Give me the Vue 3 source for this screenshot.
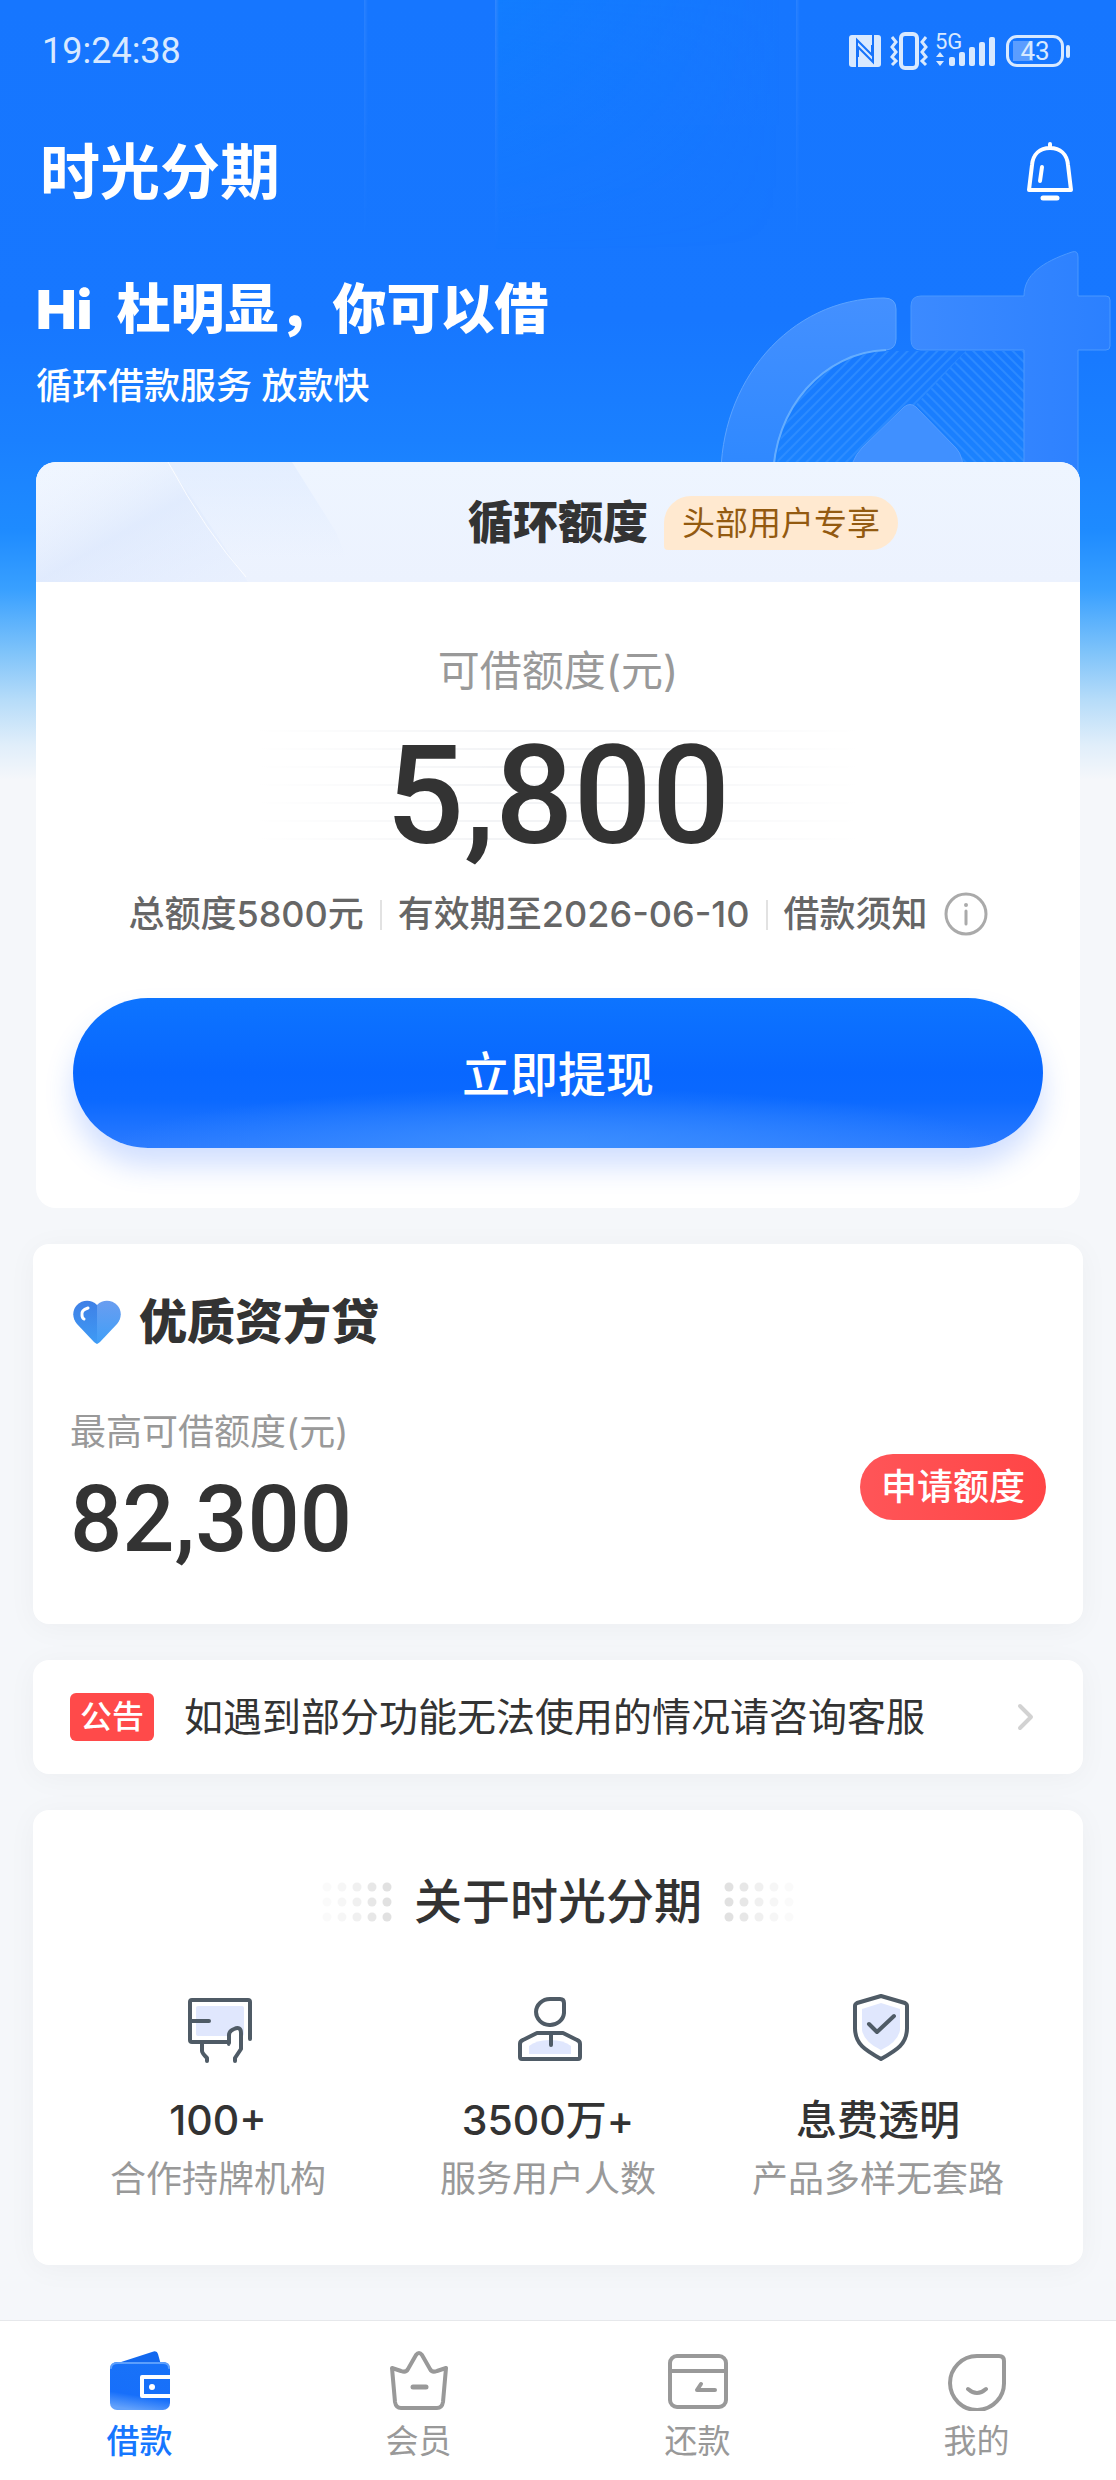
<script setup>
const bars = [9, 14, 19, 24, 29]
const dots = [0.12, 0.25, 0.45, 0.7, 0.9]
const tabs = [
  { id: 'loan', name: '借款' },
  { id: 'member', name: '会员' },
  { id: 'repay', name: '还款' },
  { id: 'me', name: '我的' }
]
const facts = [
  { id: 'card', value: '100+', label: '合作持牌机构' },
  { id: 'user', value: '3500万+', label: '服务用户人数' },
  { id: 'shield', value: '息费透明', label: '产品多样无套路' }
]
</script>

<template>
  <div class="page">
    <svg class="deco" width="400" height="240" viewBox="716 240 400 240" fill="none" aria-hidden="true">
      <defs>
        <linearGradient id="arc" x1="0" y1="0" x2="0" y2="1">
          <stop offset="0" stop-color="#4490ff" /><stop offset="1" stop-color="#2d88ff" />
        </linearGradient>
        <linearGradient id="stem" x1="911" y1="300" x2="1110" y2="300" gradientUnits="userSpaceOnUse">
          <stop offset="0" stop-color="#3c8aff" /><stop offset="1" stop-color="#2b80ff" />
        </linearGradient>
        <pattern id="rise" width="7" height="7" patternUnits="userSpaceOnUse" patternTransform="rotate(-45)">
          <path d="M0 1H7" stroke="#3a94ff" stroke-width="2" />
        </pattern>
        <pattern id="fall" width="7" height="7" patternUnits="userSpaceOnUse" patternTransform="rotate(45)">
          <path d="M0 1H7" stroke="#3a94ff" stroke-width="2" />
        </pattern>
      </defs>
      <path d="M777 470C777 400 830 351 890 351H966L846 480H777Z" fill="url(#rise)" opacity=".6" />
      <path d="M966 351H1024V480H846Z" fill="url(#fall)" opacity=".6" />
      <path d="M721 480C719 384 788 298 884 298Q896 298 896 309V339Q896 349 886 350C824 352 773 408 773 480Z" fill="url(#arc)" stroke="#5ba3ff" stroke-width="1" />
      <path d="M773 480C773 408 824 352 886 350" stroke="#64adff" stroke-width="2" />
      <path d="M921 296H1024C1024 275 1042 262 1072 252Q1078 250 1078 257V296H1106Q1110 296 1110 300V346Q1110 350 1106 350H1078V480H1024V350H921Q911 350 911 340V306Q911 296 921 296Z" fill="url(#stem)" stroke="#4a98ff" stroke-width="1" />
      <path d="M904 407Q910 402 916 407L956 448Q964 456 964 480H850Q850 460 862 448Z" fill="#4090ff" stroke="#559eff" />
    </svg>

    <header class="top">
      <div class="status">
        <time class="clock">19:24:38</time>
        <div class="signals">
          <svg width="32" height="32" viewBox="0 0 32 32" aria-hidden="true">
            <rect width="32" height="32" rx="3" fill="#d8e9ff" />
            <path d="M8 32V5L23 20V10M24 0V27L9 12V22" fill="none" stroke="#1673fb" stroke-width="2" />
          </svg>
          <svg width="38" height="38" viewBox="0 0 38 38" fill="none" stroke="#d8e9ff" stroke-width="3" aria-hidden="true">
            <rect x="11" y="2" width="16" height="34" rx="4" stroke-width="4" />
            <path d="M2 5L6 10L2 15L6 20L2 25L6 29L2 33M36 5L32 10L36 15L32 20L36 25L32 29L36 33" />
          </svg>
          <div class="mobile">
            <span class="gen">5G</span>
            <svg class="updown" width="8" height="14" viewBox="0 0 8 14" fill="#d8e9ff" aria-hidden="true"><path d="M4 0L8 5H0ZM4 14L0 9H8Z" /></svg>
            <i v-for="h in bars" :key="h" class="bar" :style="{ height: h + 'px' }"></i>
          </div>
          <div class="battery"><span>43</span></div>
        </div>
      </div>
      <div class="brand">
        <strong class="logo">时光分期</strong>
        <button class="bell" type="button" aria-label="消息">
          <svg width="50" height="60" viewBox="0 0 50 60" fill="none" stroke="#fff" stroke-width="4" stroke-linecap="round" stroke-linejoin="round" aria-hidden="true">
            <path d="M25 2V6M4 48L7 23C8 12 15 6 25 6S42 12 43 23L46 48ZM17 25L15 39" />
            <path d="M18 56H32" stroke-width="5" />
          </svg>
        </button>
      </div>
      <h1><span>Hi</span><span>杜明显，你可以借</span></h1>
      <p class="sub">循环借款服务 放款快</p>
    </header>

    <main>
      <section class="quota">
        <div class="quota-head">
          <svg class="sheen" width="320" height="120" viewBox="0 0 320 120" aria-hidden="true">
            <defs>
              <linearGradient id="sh" x1="0" y1="0" x2="1" y2="1">
                <stop offset="0" stop-color="#fff" stop-opacity=".1" /><stop offset=".5" stop-color="#cfdffc" stop-opacity=".4" /><stop offset="1" stop-color="#dce8ff" stop-opacity=".2" />
              </linearGradient>
              <linearGradient id="sh2" x1="0" y1="0" x2="0" y2="1">
                <stop offset="0" stop-color="#d9e7ff" stop-opacity=".5" /><stop offset=".8" stop-color="#d9e7ff" stop-opacity="0" />
              </linearGradient>
            </defs>
            <path d="M0 0H132L212 120H0Z" fill="url(#sh)" />
            <path d="M132 0H256L300 70L320 120H212Z" fill="url(#sh2)" />
            <path d="M132 0Q170 70 210 115" fill="none" stroke="#fff" stroke-opacity=".8" />
          </svg>
          <h2>循环额度</h2>
          <span class="vip">头部用户专享</span>
        </div>
        <p class="avail">可借额度(元)</p>
        <p class="amount">5,800</p>
        <div class="meta">
          <span>总额度5800元</span>
          <span>有效期至2026-06-10</span>
          <a href="#notice">借款须知
            <svg width="44" height="44" viewBox="0 0 44 44" fill="none" stroke="#aaa" stroke-width="2" stroke-linecap="round" aria-hidden="true">
              <circle cx="22" cy="22" r="20" stroke-width="3" /><path d="M22 19V32" stroke-width="3" /><circle cx="22" cy="13" r="1" stroke-width="2" />
            </svg>
          </a>
        </div>
        <button class="withdraw" type="button">立即提现</button>
      </section>

      <section class="card lender">
        <div class="lender-title">
          <svg width="48" height="44" viewBox="0 0 48 44" aria-hidden="true">
            <defs>
              <linearGradient id="hl" x1="0" y1="0" x2="0" y2="1"><stop offset="0" stop-color="#3f80e6" /><stop offset="1" stop-color="#3e9bf5" /></linearGradient>
              <linearGradient id="hr" x1="0" y1="0" x2="0" y2="1"><stop offset="0" stop-color="#6a9df0" /><stop offset="1" stop-color="#3f9ff8" /></linearGradient>
            </defs>
            <path d="M24 5C18-1 9 0 4 5S-1 18 4 24L21 42Q24 44 24 44Z" fill="url(#hl)" />
            <path d="M24 5C30-1 39 0 44 5S49 18 44 24L27 42Q24 44 24 44Z" fill="url(#hr)" />
            <path d="M15 8Q8 10 9 15Q9 18 11 19" fill="none" stroke="#fff" stroke-width="3" stroke-linecap="round" />
          </svg>
          <h2>优质资方贷</h2>
        </div>
        <div class="lender-row">
          <div>
            <p class="max">最高可借额度(元)</p>
            <p class="sum">82,300</p>
          </div>
          <button class="apply" type="button">申请额度</button>
        </div>
      </section>

      <a class="card notice" href="#service">
        <span class="tag">公告</span>
        <span class="msg">如遇到部分功能无法使用的情况请咨询客服</span>
        <svg width="18" height="28" viewBox="0 0 18 28" fill="none" stroke="#d2d2d2" stroke-width="4" stroke-linecap="round" stroke-linejoin="round" aria-hidden="true"><path d="M3 3L14 14L3 25" /></svg>
      </a>

      <section class="card about">
        <div class="about-title">
          <svg width="70" height="40" viewBox="0 0 70 40" aria-hidden="true">
            <g v-for="(o, i) in dots" :key="i" fill="#dedede" :opacity="o">
              <circle v-for="y in [5, 20, 35]" :key="y" :cx="5 + i * 15" :cy="y" r="4.5" />
            </g>
          </svg>
          <h2>关于时光分期</h2>
          <svg width="70" height="40" viewBox="0 0 70 40" aria-hidden="true">
            <g v-for="(o, i) in dots" :key="i" fill="#dedede" :opacity="o">
              <circle v-for="y in [5, 20, 35]" :key="y" :cx="65 - i * 15" :cy="y" r="4.5" />
            </g>
          </svg>
        </div>
        <ul class="facts">
          <li v-for="f in facts" :key="f.id">
            <svg width="72" height="72" viewBox="0 0 72 72" fill="none" stroke="#4f5b66" stroke-width="4" stroke-linecap="round" stroke-linejoin="round" aria-hidden="true">
              <g v-if="f.id === 'card'">
                <rect x="14" y="14" width="48" height="30" rx="2" fill="#e0e7fd" stroke="none" />
                <path d="M47 52V50H10Q8 50 8 48V10Q8 8 10 8H66Q68 8 68 10V47M9 29H27M20 51V59Q20 61 25 66V69" />
                <path d="M47 51V43Q47 39 52 37Q59 34 59 41V57L53 66V69" fill="#fff" />
              </g>
              <g v-else-if="f.id === 'user'" transform="translate(2 0)">
                <path d="M15 62V54Q22 48 36 48T57 54V62Z" fill="#e0e7fd" stroke="none" />
                <path d="M36 7H46Q50 7 50 11V21A14 13 0 1 1 36 7ZM23 41H49L63 48Q66 49 66 52V65Q66 67 64 67H8Q6 67 6 65V52Q6 49 9 48ZM37 42V53" />
              </g>
              <g v-else transform="translate(3 0)">
                <path d="M36 11L55 17V38Q53 50 36 58Q19 50 17 38V17Z" fill="#e0e7fd" stroke="none" />
                <path d="M36 4L60 11Q62 12 62 14V36C62 52 52 58 36 67C20 58 10 52 10 36V14Q10 12 12 11ZM24 32L32 40L49 24" />
              </g>
            </svg>
            <strong>{{ f.value }}</strong>
            <span>{{ f.label }}</span>
          </li>
        </ul>
      </section>
    </main>

    <nav class="tabs">
      <a v-for="t in tabs" :key="t.id" :href="'#' + t.id" :class="{ on: t.id === 'loan' }">
        <svg width="60" height="60" viewBox="0 0 60 60" fill="none" stroke="#999" stroke-width="4" stroke-linecap="round" stroke-linejoin="round" aria-hidden="true">
          <g v-if="t.id === 'loan'" stroke="none">
            <defs>
              <linearGradient id="wl" x1=".6" y1="0" x2=".4" y2="1"><stop offset="0" stop-color="#1872f8" /><stop offset=".7" stop-color="#176ffa" /><stop offset="1" stop-color="#64a2fb" /></linearGradient>
            </defs>
            <path d="M8 12L42 1Q47-1 48 3L51 14Z" fill="#1268ef" />
            <rect y="11" width="60" height="48" rx="7" fill="url(#wl)" />
            <path d="M1 17Q1 12 8 12H53Q59 12 59 17" fill="none" stroke="#5c9ffc" stroke-width="2" />
            <path d="M60 26H32V45H60" fill="none" stroke="#fff" stroke-width="4" />
            <circle cx="42" cy="36" r="3" fill="#fff" />
          </g>
          <g v-else-if="t.id === 'member'">
            <path d="M3 17L12 20Q17 22 19 18L27 4Q30 0 33 4L41 18Q43 22 48 20L57 17L54 51Q53 57 48 57H12Q7 57 6 51L3 17Z" />
            <path d="M24 36H37" stroke-width="5" />
          </g>
          <g v-else-if="t.id === 'repay'">
            <rect x="2" y="5" width="56" height="51" rx="7" /><path d="M2 20H58M47 39H29L33 33" />
          </g>
          <g v-else>
            <path d="M30 5H52Q57 5 57 10V31A27 27 0 1 1 30 5ZM21 38Q30 46 39 38" />
          </g>
        </svg>
        <span>{{ t.name }}</span>
      </a>
    </nav>
  </div>
</template>

<style>
body {
  margin: 0;
  background: #f5f7fa;
}
</style>

<style scoped>
.page {
  position: relative;
  display: flex;
  flex-direction: column;
  min-height: 100vh;
  color: #333;
  font-family: Inter, "Noto Sans CJK SC", sans-serif;
  background: linear-gradient(#1676ff, #1777ff 320px, #1a80ff 440px, #1e8bff 530px, #39a0ff 590px, #7cc2fa 650px, #b6dcf9 700px, #e0eefa 745px, #f5f7fa 780px);
}
.page::before {
  content: "";
  position: absolute;
  inset: 0 0 auto;
  height: 250px;
  background:
    linear-gradient(90deg, transparent 364px, #ffffff18 364px, #ffffff00 368px),
    linear-gradient(90deg, transparent 495px, #ffffff20 495px, #0a88ff60 499px, #0a88ff00 780px),
    linear-gradient(90deg, transparent 796px, #ffffff18 796px, #ffffff00 800px);
  mask-image: linear-gradient(#000, transparent);
}
h1, h2, p, ul { margin: 0; padding: 0; font-weight: 400; }
button { padding: 0; border: 0; background: none; font-family: inherit; color: #fff; cursor: pointer; }
a { color: inherit; text-decoration: none; }
svg { display: block; flex: none; }

.deco { position: absolute; top: 240px; right: 0; }

.top { position: relative; padding: 0 36px; color: #fff; }
.status { box-sizing: border-box; display: flex; align-items: center; justify-content: space-between; height: 100px; padding: 2px 8px 0 6px; color: #d8e9ff; }
.clock { font: 36px/48px Roboto, sans-serif; }
.signals { display: flex; align-items: center; gap: 9px; }
.mobile { position: relative; display: flex; align-items: flex-end; gap: 4px; height: 30px; padding: 0 2px 0 12px; }
.gen { position: absolute; left: -2px; top: -5px; font: 22px/22px Roboto, sans-serif; }
.updown { position: absolute; left: -1px; bottom: 0; }
.bar { width: 6px; border-radius: 2px; background: #d8e9ff; }
.battery {
  position: relative; box-sizing: border-box; width: 58px; height: 32px; margin-right: 8px;
  border: 3px solid #d8e9ff; border-radius: 11px; text-align: center;
  background: linear-gradient(90deg, transparent 4px, #5b9dff 4px, #5b9dff 24px, transparent 24px) 0 3px / 100% 20px no-repeat;
}
.battery span { display: block; font: 26px/26px Roboto, sans-serif; }
.battery::after { content: ""; position: absolute; right: -9px; top: 7px; width: 4px; height: 13px; border-radius: 2px; background: #d8e9ff; }

.brand { display: flex; align-items: center; justify-content: space-between; height: 60px; margin-top: 42px; padding: 0 5px 0 4px; }
.logo { font-size: 60px; line-height: 60px; font-weight: 700; }
h1 { display: flex; gap: 24px; margin-top: 78px; font-size: 54px; line-height: 60px; font-weight: 900; }
.sub { margin-top: 24px; font-size: 36px; line-height: 44px; font-weight: 500; }

main { position: relative; padding: 54px 33px 0; }
.quota { margin: 0 3px; padding-bottom: 60px; border-radius: 20px; background: #fff; overflow: hidden; text-align: center; }
.quota-head {
  box-sizing: border-box; position: relative; display: grid; grid-template-columns: 1fr auto 1fr; align-items: center; gap: 16px;
  height: 120px; padding-top: 2px; background: linear-gradient(#eef5ff, #ecf2fe);
}
.sheen { position: absolute; left: 0; top: 0; }
.quota-head h2 { grid-column: 2; position: relative; font-size: 45px; line-height: 60px; font-weight: 900; }
.vip { justify-self: start; padding: 0 18px; border-radius: 27px 27px 27px 4px; background: #ffe9d0; color: #935a10; font-size: 33px; line-height: 54px; }
.avail { margin-top: 59px; color: #999; font-size: 42px; line-height: 60px; }
.amount {
  width: 600px; margin: 29px auto 0; padding-top: 6px; font: 500 138px/120px Roboto, sans-serif;
  background:
    linear-gradient(90deg, #fff, #ffffff00 40%, #ffffff00 60%, #fff),
    repeating-linear-gradient(#f3f4f6 0 2px, #fff 2px 18px);
}
.meta { display: flex; justify-content: center; margin-top: 34px; color: #666; font-size: 36px; line-height: 48px; font-weight: 500; }
.meta > * { display: flex; align-items: center; gap: 16px; }
.meta > * + * { position: relative; margin-left: 16px; padding-left: 18px; }
.meta > * + *::before { content: ""; position: absolute; left: 0; top: 10px; width: 2px; height: 30px; background: #e2e2e2; }
.withdraw {
  display: block; width: calc(100% - 74px); height: 150px; margin: 60px auto 0; padding-bottom: 4px; border-radius: 75px;
  background:
    radial-gradient(ellipse 46% 40% at 50% 100%, #3c8fff, #3c8fff00),
    linear-gradient(#0d74ff, #0867ff 50%, #0b69ff 68%, #2c7bff);
  box-shadow: 0 18px 28px #2f6dff38; font-size: 48px; font-weight: 500;
}

.card { border-radius: 16px; background: #fff; margin-top: 36px; box-shadow: 0 4px 30px #0000000a; }
.lender { padding: 48px 37px 60px; }
.lender-title { display: flex; align-items: center; gap: 18px; padding-left: 3px; }
.lender-title h2 { font-size: 48px; line-height: 60px; font-weight: 900; }
.lender-row { display: flex; align-items: center; justify-content: space-between; margin-top: 58px; }
.max { color: #999; font-size: 36px; line-height: 44px; }
.sum { margin-top: 22px; font: 500 92px/88px Roboto, sans-serif; }
.apply { padding: 0 21px; border-radius: 33px; background: linear-gradient(90deg, #ff5558, #ff4546); font-size: 36px; line-height: 66px; font-weight: 500; }

.notice { display: flex; align-items: center; height: 114px; padding: 0 48px 0 37px; }
.tag { padding: 0 10px; border-radius: 6px; background: #ff4a4a; color: #fff; font-size: 32px; line-height: 48px; font-weight: 500; }
.msg { flex: 1; margin-left: 30px; font-size: 39px; line-height: 56px; }

.about { padding: 62px 40px 64px 20px; }
.about-title { display: flex; justify-content: center; align-items: center; gap: 22px; padding-left: 20px; }
.about-title h2 { font-size: 48px; line-height: 60px; font-weight: 500; }
.facts { display: grid; grid-template-columns: repeat(3, 1fr); margin-top: 60px; list-style: none; }
.facts li { display: flex; flex-direction: column; align-items: center; }
.facts strong { margin-top: 28px; font-size: 41px; line-height: 56px; font-weight: 500; }
.facts span { margin-top: 9px; color: #999; font-size: 36px; line-height: 44px; }

.tabs { position: relative; display: flex; margin-top: auto; border-top: 1px solid #e6e8eb; background: #fff; }
.tabs a { flex: 1; display: flex; flex-direction: column; align-items: center; gap: 10px; padding: 30px 0 19px; color: #999; font-size: 33px; line-height: 40px; }
.tabs .on { color: #1677ff; font-weight: 500; }
</style>
